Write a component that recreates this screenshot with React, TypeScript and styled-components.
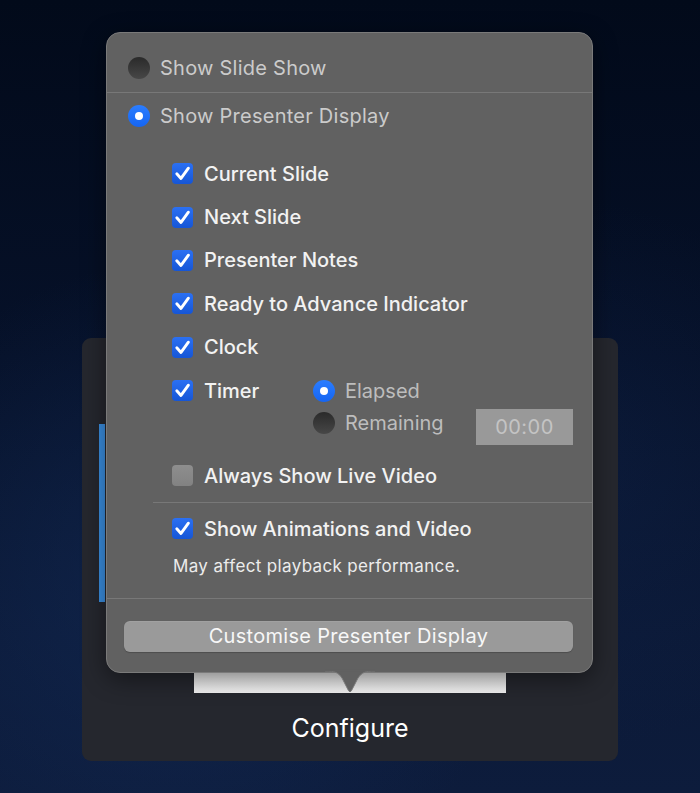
import React from "react";
import styled, { createGlobalStyle } from "styled-components";

const Global = createGlobalStyle`
  html, body { margin: 0; padding: 0; }
  body {
    font-family: Inter, "Noto Sans", "Liberation Sans", sans-serif;
    background: #040d20;
    -webkit-font-smoothing: antialiased;
  }
`;

const Page = styled.div`
  position: relative;
  width: 700px;
  height: 793px;
  overflow: hidden;
  box-sizing: border-box;
  padding-top: 338px;
  background:
    radial-gradient(ellipse 70% 60% at 25% 75%, rgba(20, 45, 90, 0.55) 0%, rgba(20, 45, 90, 0) 70%),
    radial-gradient(ellipse 60% 50% at 80% 60%, rgba(18, 38, 78, 0.35) 0%, rgba(18, 38, 78, 0) 70%),
    linear-gradient(180deg, #020a1a 0%, #061129 45%, #0b1937 80%, #0d1c3c 100%);
`;

const Window = styled.div`
  width: 536px;
  height: 423px;
  margin: 0 auto;
  box-sizing: border-box;
  background: #25272e;
  border-radius: 9px;
  display: flex;
  flex-direction: column;
  padding-bottom: 18px;
`;

const SelectionBar = styled.div`
  width: 6px;
  height: 178px;
  margin: 86px 0 0 17px;
  background: #3a8ee0;
`;

const Thumbnail = styled.div`
  align-self: center;
  width: 312px;
  height: 21px;
  margin-top: 70px;
  background: linear-gradient(180deg, #e6e6e6 0%, #f3f3f3 100%);
`;

const WindowLabel = styled.div`
  margin-top: 20px;
  text-align: center;
  color: #ffffff;
  font-size: 25px;
  line-height: 30px;
  font-weight: 400;
`;

const Popover = styled.div`
  position: absolute;
  top: 32px;
  left: 106px;
  width: 487px;
  height: 641px;
  box-sizing: border-box;
  background: #616161;
  border: 1px solid #7a7a7a;
  border-radius: 14px;
  box-shadow: 0 6px 24px rgba(0, 0, 0, 0.45);
  display: flex;
  flex-direction: column;
`;

const Arrow = styled.svg`
  position: absolute;
  left: 50%;
  bottom: -21px;
  width: 50px;
  height: 22px;
  margin-left: -25px;
  overflow: visible;
`;

const ModeRow = styled.div<{ $top?: number; $height: number; $divider?: boolean }>`
  display: flex;
  align-items: center;
  gap: 10px;
  box-sizing: border-box;
  height: ${(p) => p.$height}px;
  padding: ${(p) => p.$top ?? 0}px 0 0 21px;
  border-bottom: ${(p) => (p.$divider ? "1px solid #787878" : "none")};
`;

const ModeLabel = styled.span`
  color: #cbcbcb;
  font-size: 20px;
  font-weight: 400;
  letter-spacing: 0.25px;
`;

const Radio = styled.span<{ $on?: boolean }>`
  flex: none;
  width: 22px;
  height: 22px;
  border-radius: 50%;
  box-sizing: border-box;
  display: flex;
  align-items: center;
  justify-content: center;
  background: ${(p) =>
    p.$on
      ? "linear-gradient(180deg, #2b7dff 0%, #1565f2 100%)"
      : "linear-gradient(180deg, #2a2a2a 0%, #474747 100%)"};
  &::after {
    content: "";
    display: ${(p) => (p.$on ? "block" : "none")};
    width: 8px;
    height: 8px;
    border-radius: 50%;
    background: #ffffff;
  }
`;

const Options = styled.div`
  display: flex;
  flex-direction: column;
  margin-left: 46px;
  padding-top: 13px;
`;

const CheckRow = styled.div<{ $width?: number }>`
  display: flex;
  align-items: center;
  gap: 11px;
  height: 43.4px;
  padding-left: 19px;
  box-sizing: border-box;
  width: ${(p) => (p.$width ? `${p.$width}px` : "auto")};
  flex: none;
`;

const CheckBox = styled.span<{ $on?: boolean }>`
  flex: none;
  width: 21px;
  height: 21px;
  border-radius: 4px;
  display: flex;
  align-items: center;
  justify-content: center;
  background: ${(p) =>
    p.$on
      ? "linear-gradient(180deg, #2b70f3 0%, #1656d6 100%)"
      : "linear-gradient(180deg, #8e8e8e 0%, #828282 100%)"};
`;

const CheckLabel = styled.span`
  color: #f2f2f2;
  font-size: 20px;
  font-weight: 500;
  white-space: nowrap;
`;

const TimerRow = styled.div`
  display: flex;
  align-items: flex-start;
  padding-right: 19px;
`;

const RadioGroup = styled.div`
  display: flex;
  flex-direction: column;
  margin-top: 5.7px;
`;

const RadioRow = styled.div`
  display: flex;
  align-items: center;
  gap: 10px;
  height: 32px;
`;

const RadioLabel = styled.span`
  color: #bdbdbd;
  font-size: 20px;
  font-weight: 400;
`;

const TimeField = styled.div`
  margin: 39.7px 0 0 auto;
  width: 97px;
  height: 36px;
  background: #999999;
  color: #c4c4c4;
  font-size: 20px;
  display: flex;
  align-items: center;
  justify-content: center;
  letter-spacing: 0.5px;
`;

const Spaced = styled.div<{ $top: number }>`
  margin-top: ${(p) => p.$top}px;
`;

const Divider = styled.div<{ $top: number; $bottom: number }>`
  height: 1px;
  background: #787878;
  margin-top: ${(p) => p.$top}px;
  margin-bottom: ${(p) => p.$bottom}px;
`;

const Note = styled.div`
  padding-left: 20px;
  margin-top: 5.3px;
  color: #ececec;
  font-size: 17px;
  line-height: 20px;
  letter-spacing: 0.35px;
`;

const ActionButton = styled.button`
  margin: 0 19px 0 17px;
  height: 31px;
  border: none;
  border-radius: 6px;
  background: #9a9a9a;
  color: #f7f7f7;
  font-family: inherit;
  font-size: 20px;
  font-weight: 400;
  letter-spacing: 0.3px;
  padding: 0;
  box-shadow: inset 0 1px 0 rgba(255, 255, 255, 0.08), 0 1px 1px rgba(0, 0, 0, 0.2);
`;

const Check = () => (
  <svg width="21" height="21" viewBox="0 0 21 21">
    <path
      d="M4.8 10.8 L9 15.4 L16.4 5.2"
      fill="none"
      stroke="#ffffff"
      strokeWidth="2.9"
      strokeLinecap="round"
      strokeLinejoin="round"
    />
  </svg>
);

const Item = ({ label, on = true, width }: { label: string; on?: boolean; width?: number }) => (
  <CheckRow $width={width}>
    <CheckBox $on={on}>{on && <Check />}</CheckBox>
    <CheckLabel>{label}</CheckLabel>
  </CheckRow>
);

export default function App() {
  return (
    <>
      <Global />
      <Page>
        <Window>
          <SelectionBar />
          <Thumbnail />
          <WindowLabel>Configure</WindowLabel>
        </Window>

        <Popover>
          <ModeRow $top={11} $height={60} $divider>
            <Radio />
            <ModeLabel>Show Slide Show</ModeLabel>
          </ModeRow>
          <ModeRow $height={46}>
            <Radio $on />
            <ModeLabel>Show Presenter Display</ModeLabel>
          </ModeRow>

          <Options>
            <Item label="Current Slide" />
            <Item label="Next Slide" />
            <Item label="Presenter Notes" />
            <Item label="Ready to Advance Indicator" />
            <Item label="Clock" />
            <TimerRow>
              <Item label="Timer" width={160} />
              <RadioGroup>
                <RadioRow>
                  <Radio $on />
                  <RadioLabel>Elapsed</RadioLabel>
                </RadioRow>
                <RadioRow>
                  <Radio />
                  <RadioLabel>Remaining</RadioLabel>
                </RadioRow>
              </RadioGroup>
              <TimeField>00:00</TimeField>
            </TimerRow>
            <Spaced $top={9.3}>
              <Item label="Always Show Live Video" on={false} />
            </Spaced>
            <Divider $top={4.3} $bottom={4.3} />
            <Item label="Show Animations and Video" />
            <Note>May affect playback performance.</Note>
          </Options>

          <Divider $top={22} $bottom={22} />
          <ActionButton>Customise Presenter Display</ActionButton>

          <Arrow viewBox="0 0 50 22">
            <path d="M0 0 C10 0 13 1.5 17 7 L23.6 19.8 Q25 22 26.4 19.8 L33 7 C37 1.5 40 0 50 0 Z" fill="#616161" />
            <path
              d="M0 0 C10 0 13 1.5 17 7 L23.6 19.8 Q25 22 26.4 19.8 L33 7 C37 1.5 40 0 50 0"
              fill="none"
              stroke="#7a7a7a"
              strokeWidth="1"
            />
            <rect x="0" y="-1.2" width="50" height="1.4" fill="#616161" />
          </Arrow>
        </Popover>
      </Page>
    </>
  );
}
